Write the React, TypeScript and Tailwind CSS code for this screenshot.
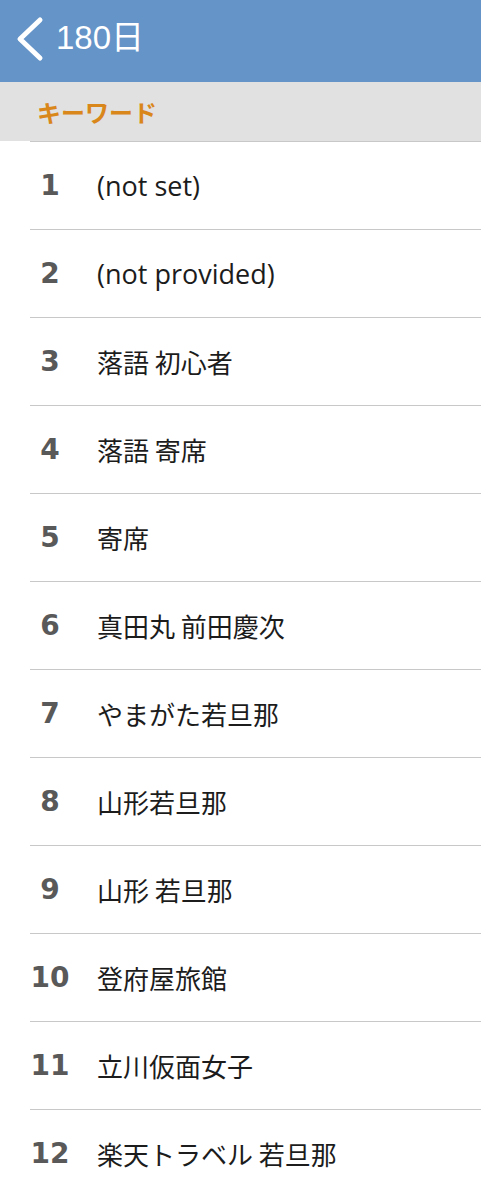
import React from "react";

const rows: [string, string, boolean][] = [
  ["1", "(not set)", true],
  ["2", "(not provided)", true],
  ["3", "落語 初心者", false],
  ["4", "落語 寄席", false],
  ["5", "寄席", false],
  ["6", "真田丸 前田慶次", false],
  ["7", "やまがた若旦那", false],
  ["8", "山形若旦那", false],
  ["9", "山形 若旦那", false],
  ["10", "登府屋旅館", false],
  ["11", "立川仮面女子", false],
  ["12", "楽天トラベル 若旦那", false],
];

export default function App() {
  return (
    <div className="w-[481px] h-[1183px] overflow-hidden bg-white">
      <div className="h-[82px] bg-[#6494c8] flex items-start pt-[14px]">
        <svg width="32" height="48" viewBox="0 0 32 48" className="ml-[12px] mt-[1px]">
          <path d="M28 5 L8 24 L28 43" fill="none" stroke="#ffffff" strokeWidth="5" strokeLinecap="round" strokeLinejoin="round" />
        </svg>
        <span
          className="ml-[12px] text-white text-[33px] leading-[48px]"
          style={{ fontFamily: '"Liberation Sans", "Noto Sans CJK JP", sans-serif' }}
        >
          180日
        </span>
      </div>
      <div className="h-[59px] bg-[#e1e1e1] flex items-center pl-[37px]">
        <span
          className="text-[#d9861a] text-[24px] font-bold leading-none"
          style={{ fontFamily: '"Noto Sans CJK JP", sans-serif' }}
        >
          キーワード
        </span>
      </div>
      <div className="flex flex-col">
        {rows.map(([n, t, latin]) => (
          <div key={n} className="ml-[30px] h-[88px] border-t border-[#c8c8c8] flex items-center shrink-0">
            <span
              className="w-[40px] text-center text-[28px] font-bold text-[#595959] leading-none"
              style={{ fontFamily: '"DejaVu Sans", sans-serif' }}
            >
              {n}
            </span>
            <span
              className={
                latin
                  ? "ml-[27px] text-[27px] text-[#1c1c1c] leading-none"
                  : "ml-[27px] text-[26px] text-[#1c1c1c] leading-none"
              }
              style={{
                fontFamily: latin
                  ? '"Open Sans", sans-serif'
                  : '"Noto Sans CJK JP", sans-serif',
              }}
            >
              {t}
            </span>
          </div>
        ))}
      </div>
    </div>
  );
}
